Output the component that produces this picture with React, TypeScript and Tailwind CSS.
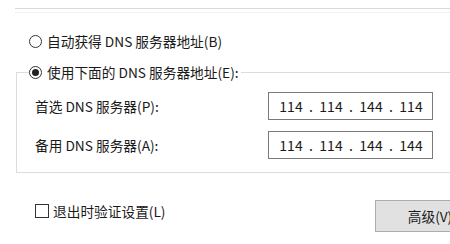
const font = { fontFamily: '"Noto Sans CJK SC", "Noto Sans", sans-serif' };

function Radio({ checked }: { checked?: boolean }) {
  return (
    <span className="w-[13px] h-[13px] rounded-full border border-[#333333] bg-white flex items-center justify-center shrink-0">
      {checked && <span className="w-[7px] h-[7px] rounded-full bg-[#222222]" />}
    </span>
  );
}

function IpBox({ parts }: { parts: string[] }) {
  return (
    <div className="w-[165px] h-[28px] border border-[#7a7a7a] bg-white flex items-center pl-[10px] text-[14px] text-[#1a1a1a]">
      {parts.map((p, i) => (
        <div key={i} className="flex items-center">
          {i > 0 && <span className="w-[16px] text-center">.</span>}
          <span className="w-[24px] text-center">{p}</span>
        </div>
      ))}
    </div>
  );
}

export default function App() {
  return (
    <div className="w-[450px] h-[244px] bg-white overflow-hidden text-[13.7px] text-[#1a1a1a]" style={font}>
      <div className="h-[8px]" />
      {/* bottom edge of the group above */}
      <div className="ml-[15px] w-[470px] h-[25px] border-t border-[#d9d9d9]">
        <div className="mt-[3px] h-px bg-[#f3f3f3]" />
      </div>

      <label className="h-[16px] flex items-center pl-[29px] gap-[5px]">
        <Radio />
        <span>自动获得 DNS 服务器地址(B)</span>
      </label>

      <fieldset className="mt-[15px] ml-[16px] w-[470px] border border-[#dcdcdc] pb-[13px]">
        <legend className="ml-[12px] pr-[2px] h-[16px] flex items-center gap-[5px]">
          <Radio checked />
          <span>使用下面的 DNS 服务器地址(E):</span>
        </legend>
        <div className="mt-[12px] pl-[18px] flex items-center">
          <span className="w-[233px]">首选 DNS 服务器(P):</span>
          <IpBox parts={['114', '114', '144', '114']} />
        </div>
        <div className="mt-[11px] pl-[18px] flex items-center">
          <span className="w-[233px]">备用 DNS 服务器(A):</span>
          <IpBox parts={['114', '114', '144', '144']} />
        </div>
      </fieldset>

      <div className="mt-[27px] w-[485px] flex items-start">
        <label className="flex-1 flex items-center gap-[4px] pl-[35px] mt-[4px] h-[14px]">
          <span className="w-[14px] h-[14px] border border-[#333333] bg-white shrink-0" />
          <span>退出时验证设置(L)</span>
        </label>
        <button className="w-[110px] h-[32px] bg-[#e1e1e1] border border-[#adadad] text-[13.7px] text-[#1a1a1a] shrink-0">
          高级(V)
        </button>
      </div>
    </div>
  );
}
